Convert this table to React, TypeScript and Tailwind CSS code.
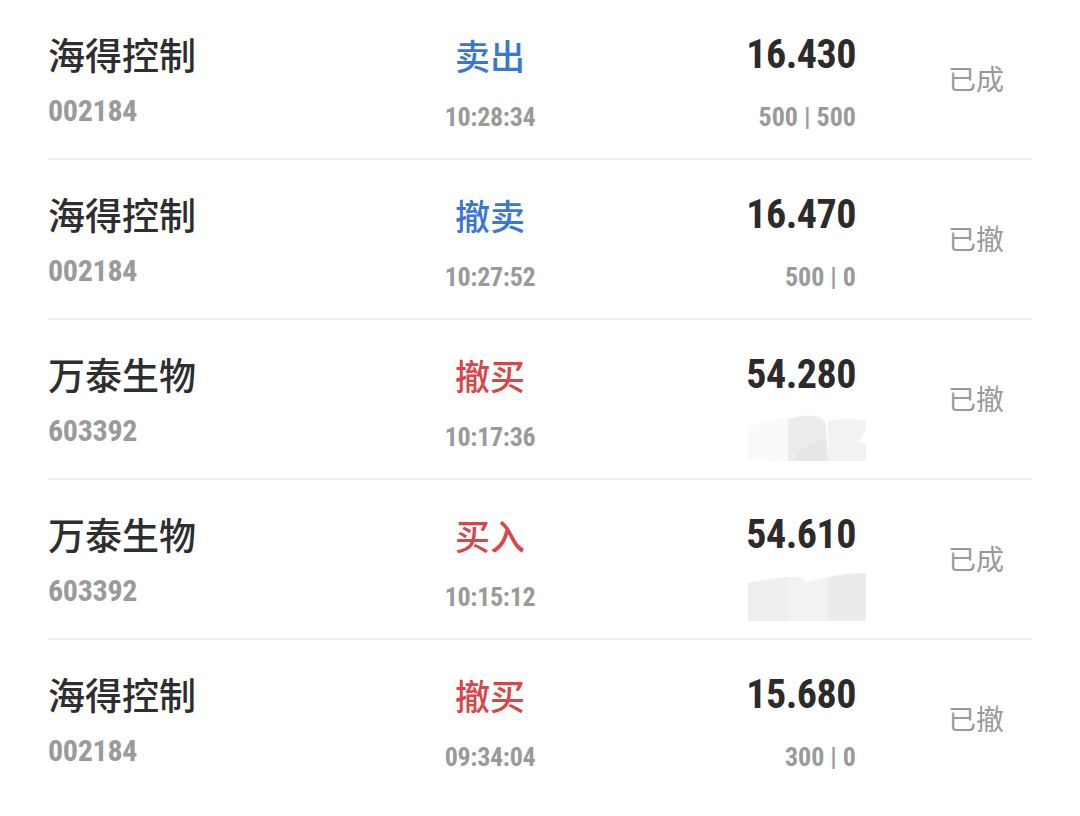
import React from 'react';

type Order = {
  name: string;
  code: string;
  action: string;
  side: 'buy' | 'sell';
  time: string;
  price: string;
  qty?: string;
  status: string;
};

const orders: Order[] = [
  { name: '海得控制', code: '002184', action: '卖出', side: 'sell', time: '10:28:34', price: '16.430', qty: '500 | 500', status: '已成' },
  { name: '海得控制', code: '002184', action: '撤卖', side: 'sell', time: '10:27:52', price: '16.470', qty: '500 | 0', status: '已撤' },
  { name: '万泰生物', code: '603392', action: '撤买', side: 'buy', time: '10:17:36', price: '54.280', status: '已撤' },
  { name: '万泰生物', code: '603392', action: '买入', side: 'buy', time: '10:15:12', price: '54.610', status: '已成' },
  { name: '海得控制', code: '002184', action: '撤买', side: 'buy', time: '09:34:04', price: '15.680', qty: '300 | 0', status: '已撤' },
];

const cjk = "font-['Noto_Sans_CJK_SC','Noto_Sans',sans-serif]";
const num = "font-['Liberation_Sans_Narrow','Roboto_Condensed','Liberation_Sans',sans-serif]";

// mosaic left over where the quantity was hidden
function Smudge({ variant }: { variant: number }) {
  return (
    <svg width="118" height="48" viewBox="0 0 118 48" className="mr-[-10px] mt-[18px]">
      {variant === 0 ? (
        <>
          <path d="M0 14 Q20 6 40 6 L40 48 L0 47 Z" fill="#fafafa" />
          <path d="M40 6 Q60 0 72 4 Q80 10 78 16 L80 48 L40 48 Z" fill="#ececec" />
          <path d="M80 8 Q100 4 118 8 Q120 20 110 28 L118 30 L118 48 L80 48 Z" fill="#f2f2f2" />
          <path d="M50 40 Q64 28 78 26 L80 48 L48 48 Z" fill="#e6e6e6" />
        </>
      ) : (
        <>
          <path d="M0 10 Q20 6 40 4 L40 48 L0 48 Z" fill="#eeeeee" />
          <path d="M40 4 Q54 2 58 10 L80 4 L80 48 L40 48 Z" fill="#f2f2f2" />
          <path d="M80 4 Q100 0 118 0 L118 48 L80 48 Z" fill="#ebebeb" />
        </>
      )}
    </svg>
  );
}

function OrderRow({ order, index, last }: { order: Order; index: number; last: boolean }) {
  const actionColor = order.side === 'sell' ? 'text-[#3a76d6]' : 'text-[#d8454a]';
  return (
    <div className={`flex h-[160px] ${last ? '' : 'border-b-2 border-[#efefef]'}`}>
      {/* name and code */}
      <div className="flex w-[300px] flex-col pt-[36px]">
        <div className={`${cjk} text-[37px] leading-none font-medium text-[#2e2e2e]`}>{order.name}</div>
        <div className={`${num} mt-[23px] text-[30px] leading-none font-bold tracking-[-0.3px] text-[#9a9a9a]`}>{order.code}</div>
      </div>

      {/* action and time */}
      <div className="flex w-[284px] flex-col items-center pt-[37px]">
        <div className={`${cjk} text-[35px] leading-none font-medium ${actionColor}`}>{order.action}</div>
        <div className={`${num} mt-[32px] text-[26px] leading-none font-bold tracking-[-0.3px] text-[#9a9a9a]`}>{order.time}</div>
      </div>

      {/* price and quantity */}
      <div className="flex w-[224px] flex-col items-end pt-[35px]">
        <div className={`${num} text-[40px] leading-none font-bold tracking-[-0.5px] text-[#2b2b2b]`}>{order.price}</div>
        {order.qty ? (
          <div className={`${num} mt-[29px] text-[26px] leading-none font-bold text-[#9a9a9a]`}>{order.qty}</div>
        ) : (
          <Smudge variant={index === 2 ? 0 : 1} />
        )}
      </div>

      {/* status */}
      <div className="ml-[92px] pt-[64px]">
        <div className={`${cjk} text-[28px] leading-none text-[#9a9a9a]`}>{order.status}</div>
      </div>
    </div>
  );
}

export default function App() {
  return (
    <div className="min-h-[816px] w-[1080px] bg-white">
      <div className="mx-12">
        {orders.map((o, i) => (
          <OrderRow key={i} order={o} index={i} last={i === orders.length - 1} />
        ))}
      </div>
    </div>
  );
}
